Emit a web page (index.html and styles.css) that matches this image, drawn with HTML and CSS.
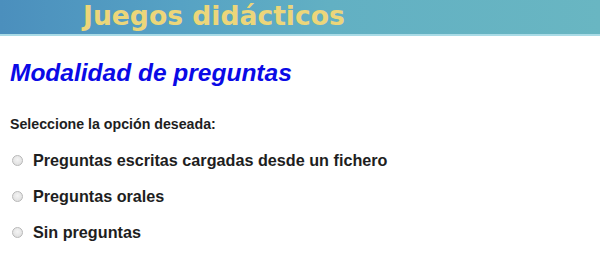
FILE: index.html
```html
<!DOCTYPE html>
<html lang="es">
<head>
<meta charset="utf-8">
<link rel="stylesheet" href="styles.css">
</head>
<body>
<header class="banner">
  <div class="banner-title">Juegos didácticos</div>
</header>
<main class="content">
  <h1 class="title">Modalidad de preguntas</h1>
  <p class="prompt">Seleccione la opción deseada:</p>
  <ul class="options">
    <li class="option"><span class="radio"></span><span class="label">Preguntas escritas cargadas desde un fichero</span></li>
    <li class="option"><span class="radio"></span><span class="label">Preguntas orales</span></li>
    <li class="option"><span class="radio"></span><span class="label">Sin preguntas</span></li>
  </ul>
</main>
</body>
</html>
```
FILE: styles.css
```css
html, body {
  margin: 0;
  padding: 0;
  background: #ffffff;
}
body {
  font-family: "Liberation Sans", Arial, sans-serif;
  color: #1e1e1e;
}
.banner {
  height: 34px;
  background: linear-gradient(90deg, #4b8fbd 0%, #56a2c4 30%, #62b0c3 55%, #69b6c2 100%);
  border-bottom: 2px solid #a9dbe6;
  display: flex;
  align-items: center;
  padding-left: 83px;
}
.banner-title {
  font-family: "DejaVu Sans", sans-serif;
  font-weight: bold;
  font-size: 26.6px;
  color: #ecd67a;
  line-height: 1;
  margin-top: -2px;
}
.content {
  padding: 0 10px;
}
.title {
  margin: 23px 0 0;
  font-size: 24.5px;
  font-style: italic;
  font-weight: bold;
  color: #0a0ae6;
  line-height: 28px;
}
.prompt {
  margin: 29px 0 0;
  font-size: 14.2px;
  font-weight: bold;
  line-height: 16px;
}
.options {
  list-style: none;
  margin: 19px 0 0;
  padding: 0;
  display: flex;
  flex-direction: column;
  gap: 18px;
}
.option {
  display: flex;
  align-items: center;
  height: 18px;
  font-size: 16.2px;
  font-weight: bold;
}
.radio {
  width: 11px;
  height: 11px;
  border-radius: 50%;
  box-sizing: border-box;
  border: 1px solid #b8b8b8;
  background: radial-gradient(circle at 50% 40%, #f4f4f4 0%, #e2e2e2 70%, #d6d6d6 100%);
  margin: 0 10px 0 2px;
  flex: none;
}
.label {
  line-height: 18px;
}
```
